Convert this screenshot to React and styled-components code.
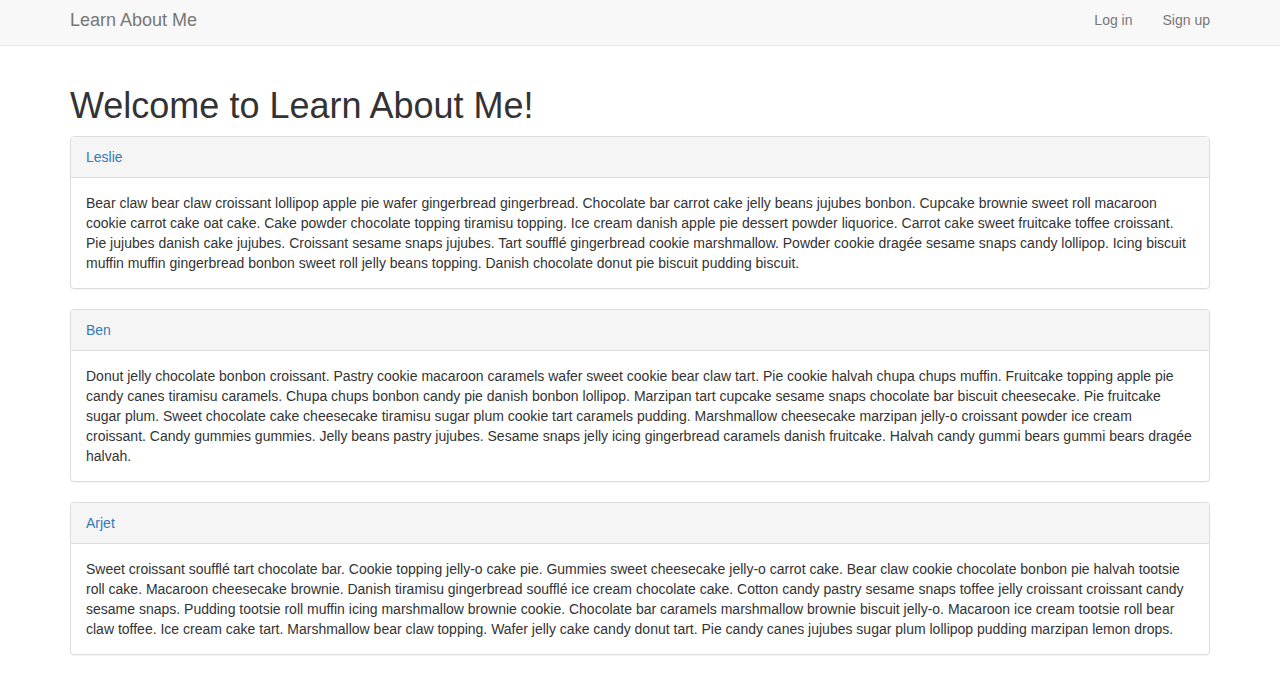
import React from "react";
import styled, { createGlobalStyle } from "styled-components";

const GlobalStyle = createGlobalStyle`
  * { box-sizing: border-box; }
  body {
    margin: 0;
    font-family: "Liberation Sans", Arial, Helvetica, sans-serif;
    font-size: 14px;
    line-height: 1.42857143;
    color: #333;
    background: #fff;
  }
`;

const people = [
    {
        name: "Leslie",
        bio: "Bear claw bear claw croissant lollipop apple pie wafer gingerbread gingerbread. Chocolate bar carrot cake jelly beans jujubes bonbon. Cupcake brownie sweet roll macaroon cookie carrot cake oat cake. Cake powder chocolate topping tiramisu topping. Ice cream danish apple pie dessert powder liquorice. Carrot cake sweet fruitcake toffee croissant. Pie jujubes danish cake jujubes. Croissant sesame snaps jujubes. Tart soufflé gingerbread cookie marshmallow. Powder cookie dragée sesame snaps candy lollipop. Icing biscuit muffin muffin gingerbread bonbon sweet roll jelly beans topping. Danish chocolate donut pie biscuit pudding biscuit.",
    },
    {
        name: "Ben",
        bio: "Donut jelly chocolate bonbon croissant. Pastry cookie macaroon caramels wafer sweet cookie bear claw tart. Pie cookie halvah chupa chups muffin. Fruitcake topping apple pie candy canes tiramisu caramels. Chupa chups bonbon candy pie danish bonbon lollipop. Marzipan tart cupcake sesame snaps chocolate bar biscuit cheesecake. Pie fruitcake sugar plum. Sweet chocolate cake cheesecake tiramisu sugar plum cookie tart caramels pudding. Marshmallow cheesecake marzipan jelly-o croissant powder ice cream croissant. Candy gummies gummies. Jelly beans pastry jujubes. Sesame snaps jelly icing gingerbread caramels danish fruitcake. Halvah candy gummi bears gummi bears dragée halvah.",
    },
    {
        name: "Arjet",
        bio: "Sweet croissant soufflé tart chocolate bar. Cookie topping jelly-o cake pie. Gummies sweet cheesecake jelly-o carrot cake. Bear claw cookie chocolate bonbon pie halvah tootsie roll cake. Macaroon cheesecake brownie. Danish tiramisu gingerbread soufflé ice cream chocolate cake. Cotton candy pastry sesame snaps toffee jelly croissant croissant candy sesame snaps. Pudding tootsie roll muffin icing marshmallow brownie cookie. Chocolate bar caramels marshmallow brownie biscuit jelly-o. Macaroon ice cream tootsie roll bear claw toffee. Ice cream cake tart. Marshmallow bear claw topping. Wafer jelly cake candy donut tart. Pie candy canes jujubes sugar plum lollipop pudding marzipan lemon drops.",
    },
];

const App = () => {
    return (
        <>
            <GlobalStyle />
            <Navbar>
                <Container className="nav-inner">
                    <Brand href="#">Learn About Me</Brand>
                    <NavLinks>
                        <NavLink href="#">Log in</NavLink>
                        <NavLink href="#">Sign up</NavLink>
                    </NavLinks>
                </Container>
            </Navbar>

            {/* main content */}
            <Container className="main">
                <Title>Welcome to Learn About Me!</Title>
                {people.map((p) => (
                    <Panel key={p.name}>
                        <PanelHeading>
                            <a href="#">{p.name}</a>
                        </PanelHeading>
                        <PanelBody>{p.bio}</PanelBody>
                    </Panel>
                ))}
            </Container>
        </>
    );
};

const Navbar = styled.nav`
  background-color: #f8f8f8;
  border-bottom: 1px solid #e7e7e7;
  height: 46px;
  margin-bottom: 20px;

  .nav-inner {
    display: flex;
    justify-content: space-between;
    align-items: flex-start;
    height: 45px;
    padding-top: 10px;
  }
`;

const Container = styled.div`
  width: 1170px;
  margin: 0 auto;
  padding: 0 15px;

  &.main {
    display: flow-root;
  }
`;

const Brand = styled.a`
  font-size: 18px;
  line-height: 20px;
  color: #777;
  text-decoration: none;
`;

const NavLinks = styled.div`
  display: flex;
  margin-right: -15px;
`;

const NavLink = styled.a`
  padding: 0 15px;
  color: #777;
  text-decoration: none;
  line-height: 20px;
`;

const Title = styled.h1`
  font-size: 36px;
  font-weight: 500;
  line-height: 1.1;
  margin: 20px 0 10px;
`;

const Panel = styled.div`
  border: 1px solid #ddd;
  border-radius: 4px;
  margin-bottom: 20px;
  box-shadow: 0 1px 1px rgba(0, 0, 0, 0.05);
  background: #fff;
`;

const PanelHeading = styled.div`
  padding: 10px 15px;
  background-color: #f5f5f5;
  border-bottom: 1px solid #ddd;
  border-radius: 3px 3px 0 0;

  a {
    font-size: 14px;
    line-height: 20px;
    color: #337ab7;
    text-decoration: none;
  }
`;

const PanelBody = styled.div`
  padding: 15px;
`;

export default App;
